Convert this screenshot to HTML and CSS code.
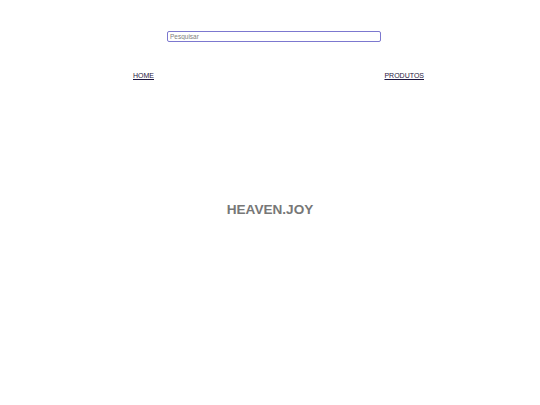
FILE: index.html
```html
<!DOCTYPE html>
<html lang="pt">
<head>
<meta charset="utf-8">
<title>Heaven.Joy</title>
<link rel="stylesheet" href="styles.css">
</head>
<body>
<header class="top">
  <div class="search-row">
    <input class="search" type="text" placeholder="Pesquisar">
  </div>
  <nav class="nav">
    <a href="#" class="nav-link">HOME</a>
    <a href="#" class="nav-link">PRODUTOS</a>
  </nav>
</header>
<main class="hero">
  <h1 class="brand">HEAVEN.JOY</h1>
</main>
</body>
</html>
```

FILE: styles.css
```css
html, body {
  margin: 0;
  padding: 0;
  background: #ffffff;
  font-family: "Liberation Sans", Arial, sans-serif;
}

.top {
  display: flex;
  flex-direction: column;
}

.search-row {
  display: flex;
  padding: 31px 0 0 167px;
}

.search {
  box-sizing: border-box;
  width: 214px;
  height: 11px;
  margin: 0;
  padding: 0 2px;
  border: 1px solid #7c78cf;
  border-radius: 2px;
  font-family: "Liberation Sans", Arial, sans-serif;
  font-size: 6.5px;
  color: #333;
  outline: none;
}

.search::placeholder {
  color: #808080;
}

.nav {
  display: flex;
  justify-content: space-between;
  padding: 29px 116px 0 133px;
}

.nav-link {
  font-size: 7px;
  color: #1f1840;
  text-decoration: underline;
  line-height: 10px;
}

.hero {
  display: flex;
  justify-content: center;
  padding-top: 121px;
}

.brand {
  margin: 0;
  font-size: 13.6px;
  font-weight: bold;
  color: #777777;
  line-height: 16px;
}
```
